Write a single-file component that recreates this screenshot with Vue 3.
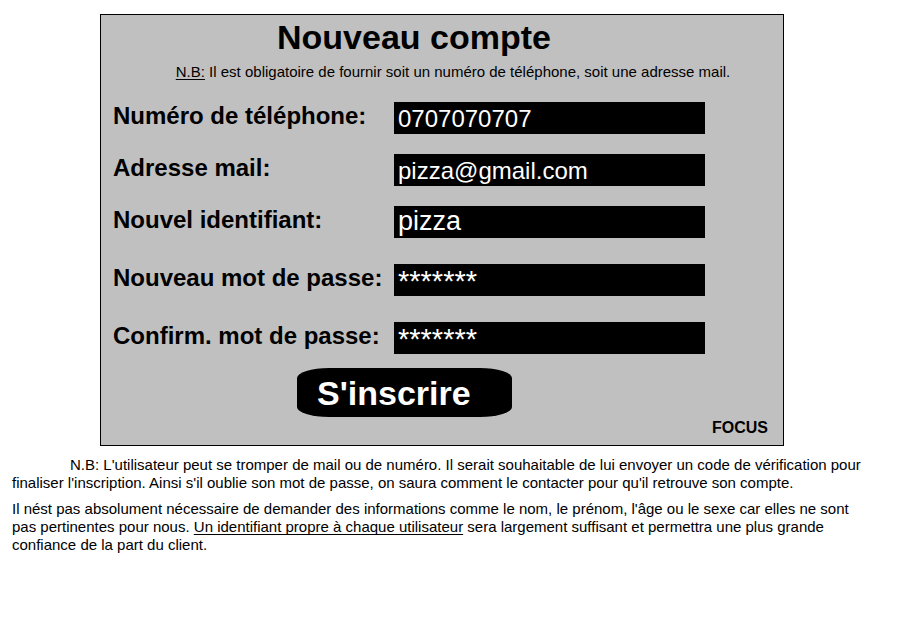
<script setup>
import { reactive } from 'vue'

const fields = reactive([
  { id: 'phone', label: 'Numéro de téléphone:', value: '0707070707', kind: 'contact' },
  { id: 'mail', label: 'Adresse mail:', value: 'pizza@gmail.com', kind: 'contact' },
  { id: 'login', label: 'Nouvel identifiant:', value: 'pizza', kind: 'login' },
  { id: 'password', label: 'Nouveau mot de passe:', value: '*******', kind: 'secret' },
  { id: 'confirm', label: 'Confirm. mot de passe:', value: '*******', kind: 'secret' }
])
</script>

<template>
  <main class="page">
    <form class="panel" @submit.prevent>
      <h1>Nouveau compte</h1>
      <p class="hint">
        <u>N.B:</u> Il est obligatoire de fournir soit un numéro de téléphone, soit une adresse mail.
      </p>
      <div v-for="field in fields" :key="field.id" class="row" :class="field.kind">
        <label :for="field.id">{{ field.label }}</label>
        <input :id="field.id" v-model="field.value" type="text" autocomplete="off" />
      </div>
      <button type="submit">S'inscrire</button>
      <p class="brand">FOCUS</p>
    </form>
    <section class="notes">
      <p class="first">
        N.B: L'utilisateur peut se tromper de mail ou de numéro. Il serait souhaitable de lui envoyer
        un code de vérification pour finaliser l'inscription. Ainsi s'il oublie son mot de passe, on
        saura comment le contacter pour qu'il retrouve son compte.
      </p>
      <p>
        Il nést pas absolument nécessaire de demander des informations comme le nom, le prénom, l'âge
        ou le sexe car elles ne sont pas pertinentes pour nous.
        <u>Un identifiant propre à chaque utilisateur</u> sera largement suffisant et permettra une
        plus grande confiance de la part du client.
      </p>
    </section>
  </main>
</template>

<style>
body {
  margin: 0;
  background: #fff;
}
</style>

<style scoped>
.page {
  padding-top: 14px;
  font-family: "Liberation Sans", Arial, sans-serif;
  font-size: 15px;
  line-height: 18px;
  color: #000;
}

h1,
p {
  margin: 0;
}

u {
  text-underline-offset: 2px;
  text-decoration-thickness: 1px;
  text-decoration-skip-ink: none;
}

.panel {
  display: flex;
  flex-direction: column;
  margin: 0 129px 0 100px;
  padding: 2px 12px 8px;
  border: 1px solid #000;
  background: #c0c0c0;
}

h1 {
  padding-right: 56px;
  font-size: 34px;
  line-height: 40px;
  text-align: center;
}

.hint {
  margin: 6px 0 21px;
  padding-left: 22px;
  text-align: center;
}

.row {
  display: grid;
  grid-template-columns: 281px 1fr;
  align-items: center;
  margin-bottom: 20px;
  padding-right: 66px;
}

.row.login,
.row.secret {
  margin-bottom: 26px;
}

.row.secret:last-of-type {
  margin-bottom: 14px;
}

label {
  padding-bottom: 4px;
  font-size: 24px;
  font-weight: bold;
  line-height: 28px;
  white-space: nowrap;
}

input {
  box-sizing: border-box;
  width: 100%;
  min-width: 0;
  height: 32px;
  margin: 0;
  padding: 2px 4px 0;
  border: 0;
  border-radius: 0;
  background: #000;
  color: #fff;
  font-family: inherit;
  font-size: 24px;
}

.login input {
  padding: 0 4px 2px;
  font-size: 27px;
}

.secret input {
  padding-top: 3px;
  font-size: 29px;
}

button {
  width: 215px;
  height: 49px;
  margin: 0 0 0 184px;
  padding: 2px 0 0 20px;
  border: 0;
  border-radius: 32px / 10px;
  background: #000;
  color: #fff;
  font-family: inherit;
  font-size: 34px;
  font-weight: bold;
  line-height: 47px;
  text-align: left;
}

.brand {
  padding: 2px 3px 0 0;
  font-size: 16px;
  font-weight: bold;
  text-align: right;
}

.notes {
  padding: 10px 42px 0 12px;
}

.notes p {
  margin-bottom: 8px;
}

.notes .first {
  text-indent: 58px;
}
</style>
